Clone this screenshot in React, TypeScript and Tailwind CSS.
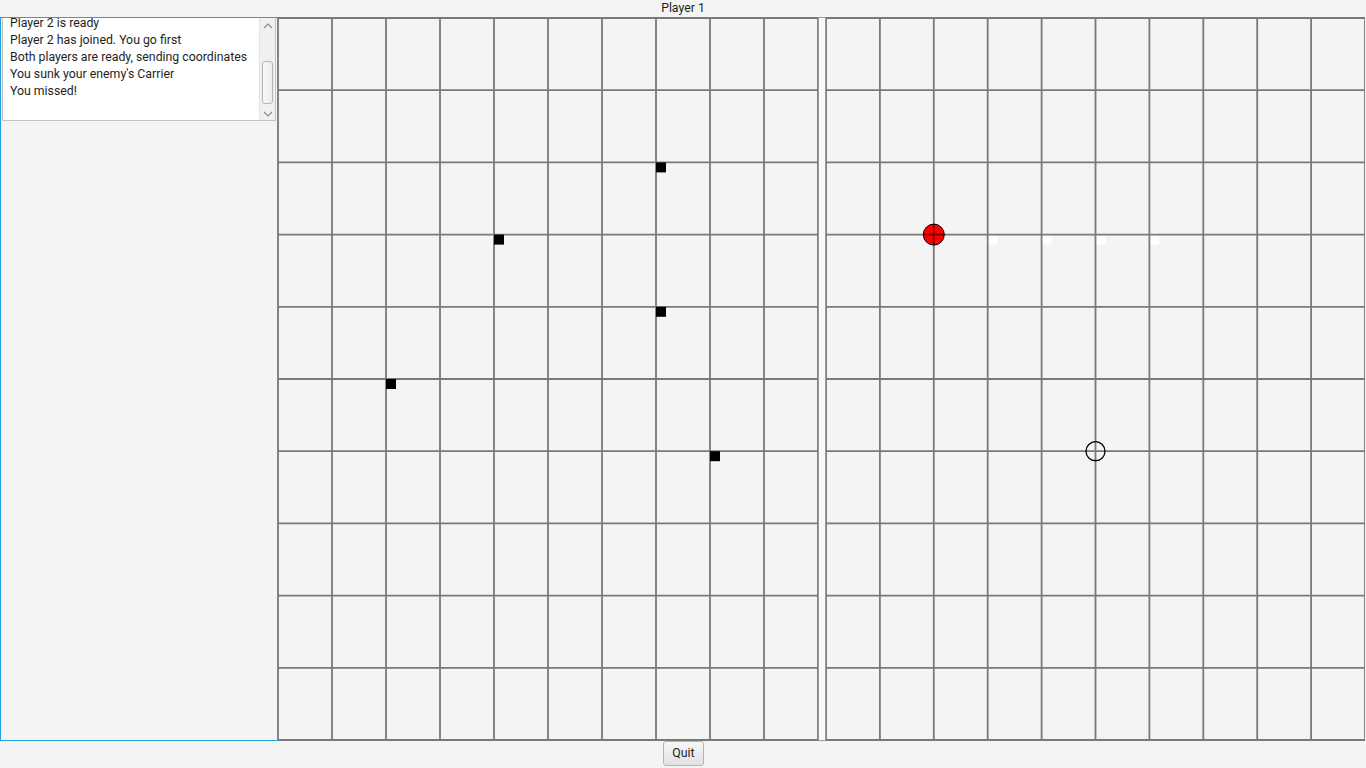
import React from "react";

type Sq = { c: number; r: number };

const ROWH = 72.2;

function Grid({
  width,
  colW,
  ships = [],
  misses = [],
  hits = [],
  targets = [],
}: {
  width: number;
  colW: number;
  ships?: Sq[];
  misses?: Sq[];
  hits?: Sq[];
  targets?: Sq[];
}) {
  const h = 724;
  const xs = Array.from({ length: 11 }, (_, i) => i * colW);
  const ys = Array.from({ length: 11 }, (_, i) => 1 + i * ROWH);
  return (
    <svg width={width} height={h} viewBox={`0 0 ${width} ${h}`} className="block shrink-0">
      {misses.map((m, i) => (
        <rect key={"m" + i} x={m.c * colW} y={1 + m.r * ROWH} width={10} height={10} fill="#ffffff" />
      ))}
      {hits.map((m, i) => (
        <circle key={"h" + i} cx={m.c * colW} cy={1 + m.r * ROWH} r={10.5} fill="#ff0000" stroke="#000" strokeWidth={1} />
      ))}
      {targets.map((m, i) => (
        <circle key={"t" + i} cx={m.c * colW} cy={1 + m.r * ROWH} r={9.5} fill="none" stroke="#000" strokeWidth={1.3} />
      ))}
      <g opacity={0.5} stroke="#000" strokeWidth={1.8}>
        {xs.map((x, i) => (
          <line key={"x" + i} x1={x} y1={0} x2={x} y2={h} />
        ))}
        {ys.map((y, i) => (
          <line key={"y" + i} x1={0} y1={y} x2={width} y2={y} />
        ))}
      </g>
      {ships.map((m, i) => (
        <rect key={"s" + i} x={m.c * colW} y={1 + m.r * ROWH} width={10} height={10} fill="#000" />
      ))}
    </svg>
  );
}

export default function App() {
  const lines = [
    "Player 2 is ready",
    "Player 2 has joined. You go first",
    "Both players are ready, sending coordinates",
    "You sunk your enemy's Carrier",
    "You missed!",
  ];
  return (
    <div
      className="w-[1366px] h-[768px] bg-[#f4f4f4] flex flex-col overflow-hidden text-[#1e1e1e]"
      style={{ fontFamily: "Roboto, 'Liberation Sans', sans-serif" }}
    >
      <div className="h-[17px] text-center text-[12.3px] leading-[17px]">Player 1</div>
      <div className="h-[724px] flex flex-row">
        <div className="w-[278px] shrink-0 border border-[#1fa2de] bg-[#f4f4f4]">
          <div className="mx-px h-[103px] bg-white border-x border-b border-[#c4c4c4] flex flex-row">
            <div className="flex-1 overflow-hidden pl-[7px]">
              <div className="-mt-[3px] text-[12.3px] leading-[17px] whitespace-nowrap">
                {lines.map((l) => (
                  <div key={l}>{l}</div>
                ))}
              </div>
            </div>
            <div className="w-[16px] shrink-0 bg-[#f0f0f0] border-l border-[#e2e2e2] flex flex-col items-center">
              <svg width="10" height="6" viewBox="0 0 10 6" className="mt-[5px]">
                <path d="M1 5 L5 1 L9 5" fill="none" stroke="#8a8a8a" strokeWidth="1.2" />
              </svg>
              <div className="mt-[32px] w-[11px] h-[43px] rounded-[3px] border border-[#b4b4b4] bg-gradient-to-r from-[#f8f8f8] to-[#ececec]" />
              <svg width="10" height="6" viewBox="0 0 10 6" className="mt-[7px]">
                <path d="M1 1 L5 5 L9 1" fill="none" stroke="#8a8a8a" strokeWidth="1.2" />
              </svg>
            </div>
          </div>
        </div>
        <Grid
          width={540}
          colW={54}
          ships={[
            { c: 7, r: 2 },
            { c: 4, r: 3 },
            { c: 7, r: 4 },
            { c: 2, r: 5 },
            { c: 8, r: 6 },
          ]}
        />
        <div className="w-[8px] shrink-0 bg-[#fafafa] border-x border-y border-[#9a9a9a]" />
        <Grid
          width={539}
          colW={53.9}
          hits={[{ c: 2, r: 3 }]}
          misses={[
            { c: 3, r: 3 },
            { c: 4, r: 3 },
            { c: 5, r: 3 },
            { c: 6, r: 3 },
          ]}
          targets={[{ c: 5, r: 6 }]}
        />
      </div>
      <div className="flex-1 flex justify-center">
        <button className="mt-0 w-[41px] h-[25px] rounded-[3px] border border-[#b5b5b5] bg-gradient-to-b from-[#f7f7f7] to-[#e1e1e1] text-[12.3px] leading-[23px] text-[#1e1e1e] ml-[1px]">
          Quit
        </button>
      </div>
    </div>
  );
}
